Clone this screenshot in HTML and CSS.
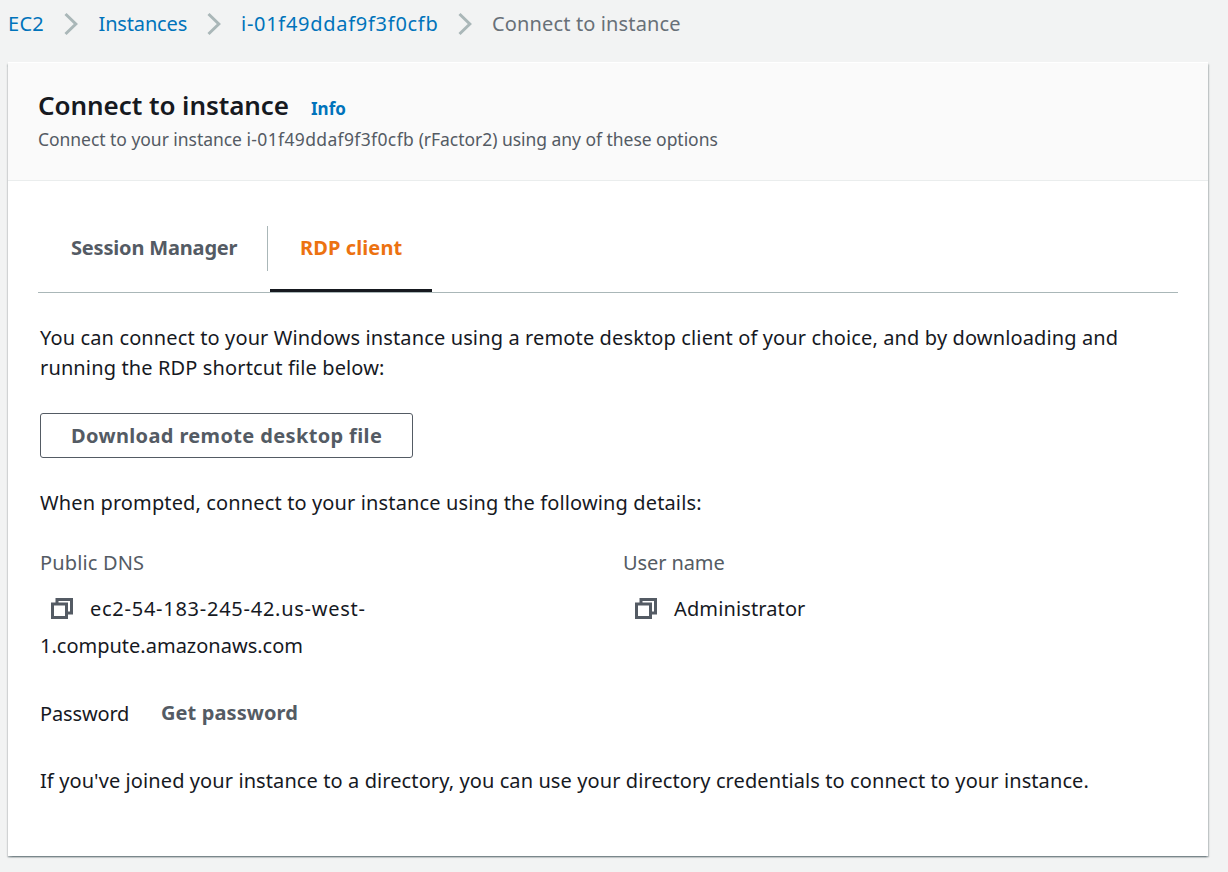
FILE: index.html
```html
<!DOCTYPE html>
<html lang="en">
<head>
<meta charset="utf-8">
<title>Connect to instance</title>
<link rel="stylesheet" href="styles.css">
</head>
<body>
<nav class="crumbs">
  <a class="crumb crumb-service">EC2</a>
  <svg class="chevron" viewBox="0 0 14 24"><path d="M1.5 2 L11.8 12 L1.5 22"/></svg>
  <a class="crumb crumb-list">Instances</a>
  <svg class="chevron" viewBox="0 0 14 24"><path d="M1.5 2 L11.8 12 L1.5 22"/></svg>
  <a class="crumb crumb-id">i-01f49ddaf9f3f0cfb</a>
  <svg class="chevron" viewBox="0 0 14 24"><path d="M1.5 2 L11.8 12 L1.5 22"/></svg>
  <span class="crumb crumb-current">Connect to instance</span>
</nav>
<main class="panel">
  <header class="panel-head">
    <div class="title-row"><h1 class="title">Connect to instance</h1><a class="info">Info</a></div>
    <p class="subtitle">Connect to your instance <span class="subtitle-id">i-01f49ddaf9f3f0cfb</span> (rFactor2) using any of these options</p>
  </header>
  <div class="tabs">
    <div class="tab tab-session"><span>Session Manager</span></div>
    <div class="tab tab-rdp"><span>RDP client</span></div>
  </div>
  <section class="content">
    <p class="intro">You can connect to your Windows instance using a remote desktop client of your choice, and by downloading and<br>running the RDP shortcut file below:</p>
    <button class="download"><span>Download remote desktop file</span></button>
    <p class="prompted">When prompted, connect to your instance using the following details:</p>
    <div class="details">
      <div>
        <div class="label label-dns">Public DNS</div>
        <div class="value"><svg class="copy" viewBox="0 0 22 22"><path d="M6 5V1.5H20.5V15H17"/><path d="M1.5 6H15.5V19.5H1.5Z"/></svg><span class="dns-first">ec2-54-183-245-42.us-west-</span><br><span class="dns-second">1.compute.amazonaws.com</span></div>
      </div>
      <div>
        <div class="label label-user">User name</div>
        <div class="value value-user"><svg class="copy" viewBox="0 0 22 22"><path d="M6 5V1.5H20.5V15H17"/><path d="M1.5 6H15.5V19.5H1.5Z"/></svg><span class="admin">Administrator</span></div>
      </div>
    </div>
    <div class="password-row"><span class="password">Password</span><a class="get-password">Get password</a></div>
    <p class="directory">If you've joined your instance to a directory, you can use your directory credentials to connect to your instance.</p>
  </section>
</main>
</body>
</html>
```
FILE: styles.css
```css
* { box-sizing: border-box; }
body { margin: 0; height: 872px; overflow: hidden; background: #f2f3f3; color: #16191f; font: 20px/30px "Noto Sans", "Open Sans", sans-serif; white-space: nowrap; }
p, h1 { margin: 0; }
.crumbs { display: flex; align-items: center; height: 62px; padding: 0 0 14px 8px; color: #0073bb; }
.chevron { width: 14px; height: 24px; flex: none; fill: none; stroke: #aab7b8; stroke-width: 3; }
.crumb { flex: none; }
.crumb-service { width: 55.5px; letter-spacing: 0.3px; }
.crumb-list { width: 108.5px; margin-left: 21px; letter-spacing: -0.15px; }
.crumb-id { width: 217px; margin-left: 20px; letter-spacing: 0.72px; }
.crumb-current { margin-left: 20px; color: #687078; letter-spacing: 0.14px; }
.panel { width: 1200px; height: 794px; margin-left: 8px; background: #fff; box-shadow: 0 1.5px 1.5px rgba(0,28,36,.3), 1.5px 1.5px 1.5px rgba(0,28,36,.15), -1.5px 1.5px 1.5px rgba(0,28,36,.15); }
.panel-head { height: 119px; padding: 24px 30px 0; background: #fafafa; border-top: 1px solid #fff; border-bottom: 1px solid #eaeded; }
.title-row { display: flex; align-items: baseline; height: 36px; }
.title { width: 273px; font-size: 26px; line-height: 36px; font-weight: 600; letter-spacing: -0.06px; }
.info { color: #0073bb; font-size: 17px; font-weight: 700; }
.subtitle { margin-top: 1px; color: #545b64; font-size: 17.5px; line-height: 30px; letter-spacing: -0.04px; }
.subtitle-id { letter-spacing: 0.36px; }
.tabs { display: flex; height: 112px; margin: 0 30px; padding-top: 45px; border-bottom: 1px solid #aab7b8; font-weight: 700; }
.tab { height: 66px; padding: 7px 32px; }
.tab-session { width: 230px; height: 45px; padding-left: 33px; border-right: 1px solid #aab7b8; color: #545b64; letter-spacing: -0.18px; }
.tab-rdp { width: 162px; margin-left: 2px; padding-left: 30px; border-bottom: 3px solid #16191f; color: #ec7211; letter-spacing: 0.1px; }
.content { padding: 30px 32px; }
.intro, .prompted { letter-spacing: 0.13px; }
.download { display: block; width: 373px; height: 45px; margin: 30px 0; padding: 0 0 0 30px; border: 1px solid #545b64; border-radius: 3px; background: #fff; color: #545b64; font: inherit; font-weight: 700; text-align: left; letter-spacing: 0.36px; }
.details { display: grid; grid-template-columns: 583px 1fr; margin-top: 30px; }
.label { color: #545b64; }
.label-dns { letter-spacing: 0.15px; }
.label-user { letter-spacing: -0.1px; }
.value { line-height: 37px; padding-top: 12px; }
.value-user { padding-left: 1px; }
.copy { width: 22px; height: 22px; margin: 0 17px 0 11px; vertical-align: -4px; fill: none; stroke: #545b64; stroke-width: 3; }
.dns-first { letter-spacing: 0.74px; }
.admin { letter-spacing: 0.12px; }
.password-row { display: flex; margin-top: 35px; }
.password { width: 121px; letter-spacing: -0.15px; }
.get-password { color: #545b64; font-weight: 700; letter-spacing: 0.1px; margin-top: -1px; }
.directory { margin-top: 37px; letter-spacing: 0.094px; }
```
